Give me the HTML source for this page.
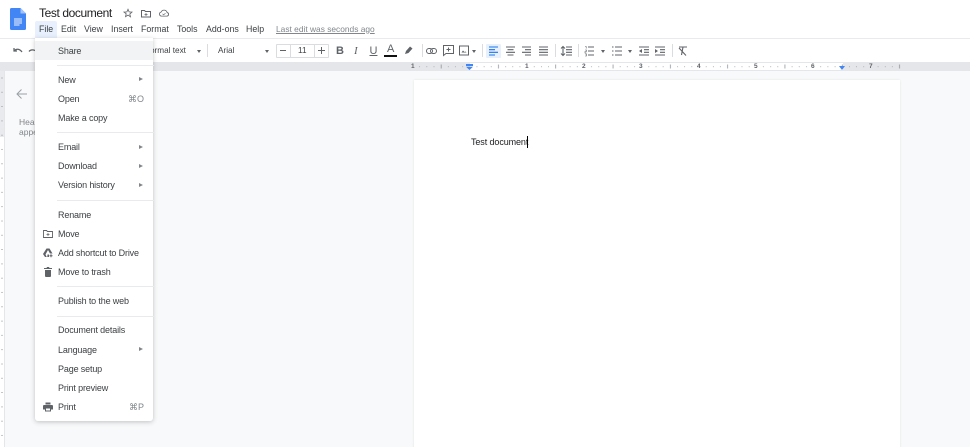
<!DOCTYPE html>
<html><head><meta charset="utf-8"><style>
*{box-sizing:border-box}
html,body{margin:0;padding:0;width:970px;height:447px;overflow:hidden;background:#f8f9fa;font-family:"Liberation Sans",sans-serif;color:#3c4043}
#w{position:relative;width:970px;height:447px;overflow:hidden;filter:blur(.35px)}
.a{position:absolute;white-space:nowrap}
.m{position:absolute;font-size:8.800px;top:22.500px;line-height:12px;color:#3c4043}
.i{position:absolute;left:58px;font-size:9px;letter-spacing:-.15px;line-height:12px;color:#3c4043;white-space:nowrap}
.s{position:absolute;left:57px;width:97px;height:1px;background:#e8eaed}
.r{position:absolute;left:139px;width:0;height:0;border-left:4px solid #80868b;border-top:2.500px solid transparent;border-bottom:2.500px solid transparent}
.k{position:absolute;right:826px;font-size:9px;line-height:12px;color:#80868b}
.t{position:absolute;top:50px;font-size:8.200px;line-height:10px;color:#3c4043}
.b{position:absolute;font-size:11px;line-height:12px;color:#5f6368;top:45px;font-weight:700}
.sep{position:absolute;top:44px;width:1px;height:13px;background:#dadce0}
svg{position:absolute;overflow:visible}
.n{position:absolute;top:62.500px;font-size:6.500px;line-height:7px;color:#5f6368;font-weight:700}
</style></head><body><div id="w">
<div class="a" style="left:0;top:0;width:970px;height:39px;background:#fff"></div>
<div class="a" style="left:0;top:38px;width:970px;height:1px;background:#e8eaed"></div>
<div class="a" style="left:0;top:39px;width:970px;height:23px;background:#fff"></div>
<div class="a" style="left:0;top:62px;width:970px;height:9px;background:#e4e6ea"></div>

<!-- doc logo -->
<svg style="left:10px;top:8px" width="16" height="22" viewBox="0 0 16 22"><path d="M1.500 0H10.500L16 5.500V20.500A1.500 1.500 0 0 1 14.500 22H1.500A1.500 1.500 0 0 1 0 20.500V1.500A1.500 1.500 0 0 1 1.500 0Z" fill="#4285f4"/><path d="M10.500 0V5.500H16Z" fill="#a1c2fa"/><path d="M4 11H12M4 13H12M4 15H12M4 17H9.500" stroke="#f1f5fe" stroke-width="1"/></svg>

<div class="a" style="left:39px;top:5px;font-size:12px;letter-spacing:-.4px;line-height:16px;color:#202124">Test document</div>
<svg style="left:123px;top:8px" width="10" height="10" viewBox="0 0 24 24"><path d="M12 3l2.700 6.300 6.800.6-5.200 4.500 1.600 6.700L12 17l-5.900 3.600 1.600-6.700L2.500 9.900l6.800-.6Z" fill="none" stroke="#5f6368" stroke-width="2"/></svg>
<svg style="left:141px;top:9px" width="10" height="9" viewBox="0 0 20 18"><path d="M1 3h6l2 2h10v11H1Z" fill="none" stroke="#5f6368" stroke-width="2"/><path d="M10 8v6M7 11h6" stroke="#5f6368" stroke-width="1.500"/></svg>
<svg style="left:159px;top:9px" width="10" height="8" viewBox="0 0 24 18"><path d="M6 16.500a5 5 0 0 1-.7-9.900A7.500 7.500 0 0 1 19.500 8a4.300 4.300 0 0 1-.5 8.500Z" fill="none" stroke="#5f6368" stroke-width="2"/><path d="M8.500 11l2.500 2.500 4.500-4" fill="none" stroke="#5f6368" stroke-width="1.500"/></svg>

<div class="a" style="left:35px;top:21px;width:22px;height:18px;background:#e8f0fe;border-radius:2px 2px 0 0"></div>
<div class="m" style="left:39px">File</div>
<div class="m" style="left:61px">Edit</div>
<div class="m" style="left:84px">View</div>
<div class="m" style="left:111px">Insert</div>
<div class="m" style="left:141px">Format</div>
<div class="m" style="left:177px">Tools</div>
<div class="m" style="left:206px">Add-ons</div>
<div class="m" style="left:246px">Help</div>
<div class="m" style="left:276px;color:#80868b;font-size:8.400px;text-decoration:underline">Last edit was seconds ago</div>

<!-- toolbar -->
<svg style="left:13px;top:47px" width="10" height="7" viewBox="0 0 20 14"><path d="M2 2v6h6M2 8c4-5 11-5 16 2" fill="none" stroke="#5f6368" stroke-width="2.500"/></svg>
<svg style="left:29px;top:47px" width="6" height="7" viewBox="0 0 12 14"><path d="M0 9c3-4 7-4 12-2" fill="none" stroke="#5f6368" stroke-width="2.500"/></svg>
<div class="t" style="left:150px;top:45.500px;color:#3c4043">ormal text</div>
<div class="a" style="left:197px;top:50px;border-left:2.500px solid transparent;border-right:2.500px solid transparent;border-top:3px solid #5f6368"></div>
<div class="sep" style="left:207px"></div>
<div class="t" style="left:218px;top:45.500px">Arial</div>
<div class="a" style="left:265px;top:50px;border-left:2.500px solid transparent;border-right:2.500px solid transparent;border-top:3px solid #5f6368"></div>
<div class="a" style="left:276px;top:44px;width:53px;height:14px;border:1px solid #dadce0;border-radius:1px"></div>
<div class="a" style="left:290px;top:44px;width:1px;height:14px;background:#dadce0"></div>
<div class="a" style="left:314px;top:44px;width:1px;height:14px;background:#dadce0"></div>
<div class="a" style="left:280px;top:50px;width:6px;height:1.200px;background:#5f6368"></div>
<div class="t" style="left:298px;top:45.500px">11</div>
<div class="a" style="left:318px;top:50px;width:7px;height:1.200px;background:#5f6368"></div>
<div class="a" style="left:321px;top:47px;width:1.200px;height:7px;background:#5f6368"></div>
<div class="b" style="left:336px">B</div>
<div class="b" style="left:354px;font-family:'Liberation Serif',serif;font-style:italic;font-weight:400">I</div>
<div class="b" style="left:369.500px;font-weight:400;text-decoration:underline">U</div>
<div class="b" style="left:387px;top:43px;font-weight:400">A</div>
<div class="a" style="left:384px;top:55px;width:13px;height:2px;background:#111"></div>
<svg style="left:404px;top:45px" width="10" height="10" viewBox="0 0 20 20"><path d="M2 18l2-6 8-9 5 4-8 9Z" fill="#5f6368"/></svg>
<div class="sep" style="left:422px"></div>
<svg style="left:426px;top:48px" width="11" height="6" viewBox="0 0 22 12"><rect x="1" y="1" width="12" height="10" rx="5" fill="none" stroke="#5f6368" stroke-width="2"/><rect x="9" y="1" width="12" height="10" rx="5" fill="none" stroke="#5f6368" stroke-width="2"/></svg>
<svg style="left:443px;top:45px" width="11" height="11" viewBox="0 0 22 22"><path d="M1 1h20v16H6l-5 4Z" fill="none" stroke="#5f6368" stroke-width="2"/><path d="M11 5v8M7 9h8" stroke="#5f6368" stroke-width="2"/></svg>
<svg style="left:459px;top:45px" width="10" height="11" viewBox="0 0 20 22"><rect x="1" y="2" width="18" height="18" fill="none" stroke="#5f6368" stroke-width="2"/><path d="M5 15l3-4 3 3 2-1 2 2Z" fill="#5f6368"/></svg>
<div class="a" style="left:472px;top:50px;border-left:2.500px solid transparent;border-right:2.500px solid transparent;border-top:3px solid #5f6368"></div>
<div class="sep" style="left:482px"></div>
<div class="a" style="left:486px;top:44px;width:15px;height:14px;background:#e8f0fe;border-radius:1px"></div>
<svg style="left:489px;top:46px" width="70" height="10" viewBox="0 0 70 10"><path d="M0 1h9M0 3.700h6M0 6.300h9M0 9h6" stroke="#1a73e8" stroke-width="1.100"/><path d="M17 1h9M18.500 3.700h6M17 6.300h9M18.500 9h6M33 1h9M36 3.700h6M33 6.300h9M36 9h6M50 1h9M50 3.700h9M50 6.300h9M50 9h9" stroke="#5f6368" stroke-width="1.100"/></svg>
<div class="sep" style="left:555px"></div>
<svg style="left:561px;top:46px" width="11" height="10" viewBox="0 0 11 10"><path d="M5 1h6M5 3.700h6M5 6.300h6M5 9h6M2 1v8" stroke="#5f6368" stroke-width="1.100"/><path d="M0 2.500L2 .5l2 2M0 7.500l2 2 2-2" fill="none" stroke="#5f6368"/></svg>
<div class="sep" style="left:578px"></div>
<svg style="left:585px;top:46px" width="9" height="10" viewBox="0 0 9 10"><path d="M3 1h6M3 5h6M3 9h6" stroke="#5f6368" stroke-width="1.100"/><path d="M0 .5h1.200v2M0 4h1.500v1.500H0V7h1.500M0 8h1.500v2H0" fill="none" stroke="#5f6368" stroke-width=".6"/></svg>
<div class="a" style="left:600.500px;top:50px;border-left:2.500px solid transparent;border-right:2.500px solid transparent;border-top:3px solid #5f6368"></div>
<svg style="left:612px;top:46px" width="10" height="10" viewBox="0 0 10 10"><path d="M3 1h7M3 5h7M3 9h7M0 1h1.500M0 5h1.500M0 9h1.500" stroke="#5f6368" stroke-width="1.100"/></svg>
<div class="a" style="left:627.500px;top:50px;border-left:2.500px solid transparent;border-right:2.500px solid transparent;border-top:3px solid #5f6368"></div>
<svg style="left:639px;top:46px" width="10" height="10" viewBox="0 0 10 10"><path d="M0 1h10M5 3.700h5M5 6.300h5M0 9h10" stroke="#5f6368" stroke-width="1.100"/><path d="M3 3v4L0 5Z" fill="#5f6368"/></svg>
<svg style="left:655px;top:46px" width="10" height="10" viewBox="0 0 10 10"><path d="M0 1h10M5 3.700h5M5 6.300h5M0 9h10" stroke="#5f6368" stroke-width="1.100"/><path d="M0 3v4l3-2Z" fill="#5f6368"/></svg>
<div class="sep" style="left:672px"></div>
<svg style="left:678px;top:46px" width="10" height="10" viewBox="0 0 20 20"><path d="M2 2h16M10 2l-3 16M2 4l14 15" fill="none" stroke="#5f6368" stroke-width="2.200"/></svg>

<!-- ruler -->
<div class="a" style="left:470px;top:63px;width:373px;height:7px;background:#fff"></div>
<svg style="left:0;top:0" width="970" height="80" viewBox="0 0 970 80"><defs><pattern id="rt" x="412.500" y="63" width="57.300" height="7" patternUnits="userSpaceOnUse"><path d="M7.160 3v1.200M14.320 3v1.200M21.480 3v1.200M35.800 3v1.200M42.980 3v1.200M50.140 3v1.200" stroke="#a8adb3" stroke-width=".7"/><path d="M28.650 1.500v4" stroke="#80868b" stroke-width=".7"/></pattern></defs><rect x="412.500" y="63" width="488" height="7" fill="url(#rt)"/></svg>
<div class="n" style="left:411px">1</div><div class="n" style="left:525px">1</div><div class="n" style="left:582px">2</div><div class="n" style="left:639px">3</div><div class="n" style="left:697px">4</div><div class="n" style="left:754px">5</div><div class="n" style="left:811px">6</div><div class="n" style="left:869px">7</div>
<svg style="left:466px;top:64px" width="7" height="6" viewBox="0 0 7 6"><path d="M0 0h7v2H0Z" fill="#4285f4"/><path d="M0 2.700h7L3.500 6Z" fill="#4285f4"/></svg>
<svg style="left:839px;top:66px" width="6" height="4" viewBox="0 0 6 4"><path d="M0 0h6L3 4Z" fill="#4285f4"/></svg>

<!-- left ruler -->
<div class="a" style="left:0;top:71px;width:5px;height:376px;background:#fff;border-right:1px solid #e4e6ea"></div>
<div class="a" style="left:0;top:71px;width:4px;height:66px;background:#e8eaed"></div>
<svg style="left:0;top:71px" width="4" height="376" viewBox="0 0 4 376"><defs><pattern id="lt" x="0" y="0" width="4" height="14.300" patternUnits="userSpaceOnUse"><path d="M1 7h2" stroke="#a8adb3" stroke-width=".7"/></pattern></defs><rect width="4" height="376" fill="url(#lt)"/></svg>

<!-- outline sidebar -->
<svg style="left:16px;top:88px" width="12" height="12" viewBox="0 0 24 24"><path d="M22 12H3M11 3l-9 9 9 9" fill="none" stroke="#9aa0a6" stroke-width="2"/></svg>
<div class="a" style="left:19px;top:116.500px;font-size:8.500px;line-height:10px;color:#80868b">Headings you add to<br>appear here.</div>

<!-- page -->
<div class="a" style="left:414px;top:80px;width:486px;height:380px;background:#fff;box-shadow:0 0 2px rgba(60,64,67,.12)"></div>
<div class="a" style="left:471px;top:136px;font-size:9px;letter-spacing:-.1px;line-height:12px;color:#202124">Test document</div>
<div class="a" style="left:527px;top:136px;width:1px;height:12px;background:#000"></div>

<!-- file menu -->
<div class="a" style="left:35px;top:38px;width:118px;height:383px;background:#fff;border-radius:0 0 3px 3px;box-shadow:0 1px 5px rgba(60,64,67,.3)"></div>
<div class="a" style="left:35px;top:41px;width:118px;height:19px;background:#f1f3f4"></div>
<div class="i" style="top:44.500px">Share</div>
<div class="s" style="top:65px"></div>
<div class="i" style="top:73.500px">New</div><div class="r" style="top:77px"></div>
<div class="i" style="top:93px">Open</div><div class="k" style="top:93px">⌘O</div>
<div class="i" style="top:112px">Make a copy</div>
<div class="s" style="top:132px"></div>
<div class="i" style="top:141px">Email</div><div class="r" style="top:145px"></div>
<div class="i" style="top:160px">Download</div><div class="r" style="top:164px"></div>
<div class="i" style="top:179px">Version history</div><div class="r" style="top:183px"></div>
<div class="s" style="top:200px"></div>
<div class="i" style="top:208.500px">Rename</div>
<div class="i" style="top:228px">Move</div>
<svg style="left:43px;top:230px" width="10" height="8" viewBox="0 0 20 16"><path d="M1 1h6l2 2h10v12H1Z" fill="none" stroke="#5f6368" stroke-width="1.800"/><path d="M10 6v6M7 9h6" stroke="#5f6368" stroke-width="1.500"/></svg>
<div class="i" style="top:247px">Add shortcut to Drive</div>
<svg style="left:43px;top:248px" width="10" height="10" viewBox="0 0 20 20"><path d="M7 1h6l6 10h-5L10 4 5 13l2.500 5H4L0 12Z" fill="#5f6368"/><path d="M9 13h3v5H8.500Z" fill="#5f6368"/><path d="M13 15.500h6M16 12.500v6" stroke="#5f6368" stroke-width="2"/></svg>
<div class="i" style="top:266px">Move to trash</div>
<svg style="left:44px;top:267px" width="8" height="10" viewBox="0 0 16 20"><path d="M2 6h12v12a2 2 0 0 1-2 2H4a2 2 0 0 1-2-2ZM0 2h5l1-2h4l1 2h5v2H0Z" fill="#5f6368"/></svg>
<div class="s" style="top:286px"></div>
<div class="i" style="top:295px">Publish to the web</div>
<div class="s" style="top:316px"></div>
<div class="i" style="top:324px">Document details</div>
<div class="i" style="top:344px">Language</div><div class="r" style="top:347px"></div>
<div class="i" style="top:363px">Page setup</div>
<div class="i" style="top:382px">Print preview</div>
<div class="i" style="top:401px">Print</div><div class="k" style="top:401px">⌘P</div>
<svg style="left:43px;top:402px" width="10" height="10" viewBox="0 0 20 20"><path d="M5 1h10v4H5ZM2 6h16a2 2 0 0 1 2 2v7h-4v4H4v-4H0V8a2 2 0 0 1 2-2Zm4 7v4h8v-4Z" fill="#5f6368" fill-rule="evenodd"/></svg>
</div></body></html>
